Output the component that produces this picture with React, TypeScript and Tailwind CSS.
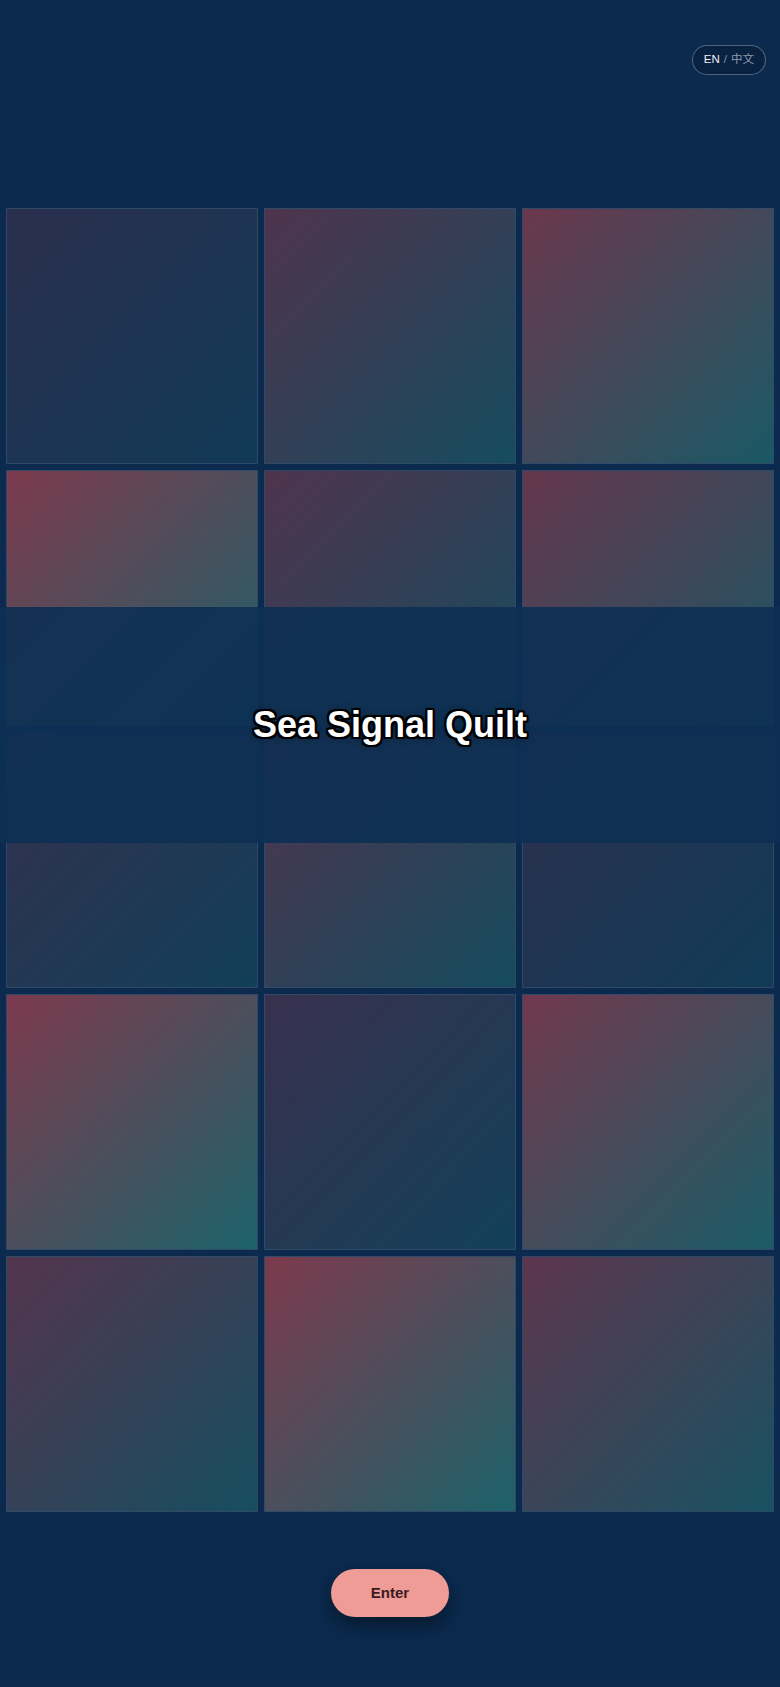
import React from 'react';

// per-tile strength of the red→teal wash, row by row
const tiles = [
    'opacity-[0.14]', 'opacity-[0.3]', 'opacity-[0.42]',
    'opacity-[0.5]', 'opacity-[0.3]', 'opacity-[0.4]',
    'opacity-[0.18]', 'opacity-[0.3]', 'opacity-[0.15]',
    'opacity-[0.5]', 'opacity-[0.2]', 'opacity-[0.45]',
    'opacity-[0.32]', 'opacity-[0.5]', 'opacity-[0.36]',
];

export default function App() {
    return (
        <div className="relative min-h-screen w-full bg-[#0b2a4e] font-['Liberation_Sans',Arial,sans-serif]">
            <header className="flex h-[208px] items-start justify-end pr-[14px] pt-[45px]">
                <button
                    type="button"
                    className="flex h-[30px] items-center gap-1 rounded-full border border-white/30 bg-[#081f3c]/70 px-[11px] text-[11.5px]"
                >
                    <span className="text-[#eef1f5]">EN</span>
                    <span className="text-[#8894a6]">/</span>
                    <span className="font-['Liberation_Sans','Noto_Sans_CJK_SC',sans-serif] text-[#8f9aab]">中文</span>
                </button>
            </header>

            <div className="grid grid-cols-3 auto-rows-[256px] gap-[6px] px-[6px]">
                {tiles.map((strength, index) => (
                    <div key={index} className="relative border border-white/15">
                        <div
                            className={`absolute inset-0 bg-linear-to-br/srgb from-[#ee4a4c] to-[#2f9a86] ${strength}`}
                        />
                    </div>
                ))}
            </div>

            <div className="flex justify-center pb-[70px] pt-[57px]">
                <button
                    type="button"
                    className="h-[48px] w-[118px] rounded-full bg-[#f09c96] text-[15px] font-bold text-[#3a1b22] shadow-[0_8px_20px_rgba(0,0,0,0.45)]"
                >
                    Enter
                </button>
            </div>

            <div className="absolute inset-x-0 top-[607px] flex h-[236px] items-center justify-center bg-[#0e3054]/[0.92]">
                <h1 className="text-[36px] font-bold leading-none text-white [text-shadow:-2px_-2px_0_#000,2px_-2px_0_#000,-2px_2px_0_#000,2px_2px_0_#000,0_2px_0_#000,0_-2px_0_#000,2px_0_0_#000,-2px_0_0_#000,0_0_8px_rgba(0,0,0,0.6)]">
                    Sea Signal Quilt
                </h1>
            </div>
        </div>
    );
}
